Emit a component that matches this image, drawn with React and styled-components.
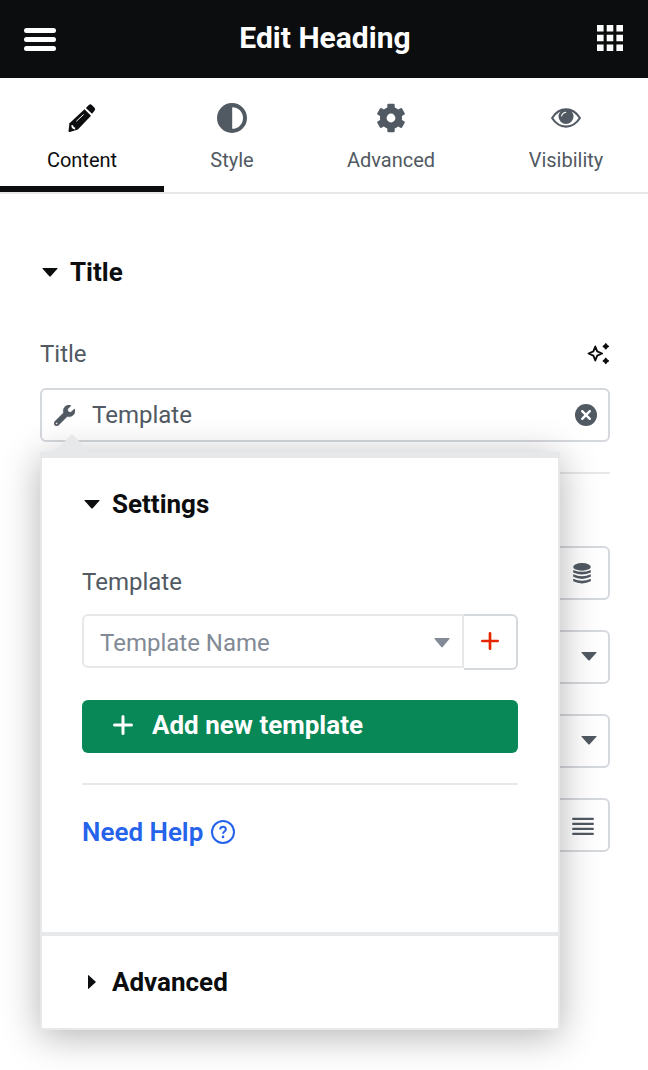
import React, { useState } from "react";
import styled, { createGlobalStyle, css } from "styled-components";

const tabs = [
    { id: "content", label: "Content", Icon: PencilIcon },
    { id: "style", label: "Style", Icon: ContrastIcon },
    { id: "advanced", label: "Advanced", Icon: GearIcon },
    { id: "visibility", label: "Visibility", Icon: EyeIcon },
];

/* icons */
function PencilIcon() {
    return (
        <svg width="28" height="30" viewBox="0 0 28 30" fill="currentColor">
            <path d="M16.500 6.300 23 12.700 9.900 26.400 1.900 29q-1.500.3-1.400-1.200L1.500 20.300Z" />
            <path d="m17.900 4.900 2.900-2.900q1.500-1.400 3 0l2.700 2.700q1.400 1.500 0 3l-2.500 3Z" />
            <path d="M8.300 18.300 15.600 11.500" stroke="#fff" strokeWidth="1" fill="none" />
            <path d="M4.200 22.200Q4.200 25.200 7.200 25.600" stroke="#fff" strokeWidth="1.800" fill="none" />
        </svg>
    );
}

function ContrastIcon() {
    return (
        <svg width="30" height="30" viewBox="0 0 30 30" fill="currentColor">
            <path fillRule="evenodd" d="M15 0a15 15 0 1 0 0 30 15 15 0 0 0 0-30Zm.2 4.200a10.800 10.800 0 0 1 0 21.600Z" />
        </svg>
    );
}

function GearIcon() {
    return (
        <svg width="28" height="30" viewBox="-14 -15 28 30" fill="currentColor">
            <circle r="11" />
            {[0, 60, 120].map((angle) => (
                <rect key={angle} x="-3.700" y="-14.300" width="7.400" height="28.600" rx="1.300" transform={`rotate(${angle})`} />
            ))}
            <circle r="4.400" fill="#fff" />
        </svg>
    );
}

function EyeIcon() {
    return (
        <svg width="30" height="20" viewBox="0 0 30 20" fill="currentColor">
            <path d="M1.100 10Q6.500 1.400 15 1.400T28.900 10Q23.500 18.600 15 18.600T1.100 10Z" fill="none" stroke="currentColor" strokeWidth="2.100" strokeLinejoin="round" />
            <circle cx="15" cy="8.500" r="7.500" />
            <path d="M10.700 8Q11.200 5 14.800 4.300" fill="none" stroke="#fff" strokeWidth="1.100" strokeLinecap="round" />
        </svg>
    );
}

function SparkleIcon() {
    return (
        <svg width="24" height="24" viewBox="0 0 24 24" fill="currentColor">
            <path d="M9.300 4.500 11.200 9.300 16.100 11.500 11.200 13.700 9.300 18.500 7.400 13.700 2.500 11.500 7.400 9.300Z" fill="#fff" stroke="currentColor" strokeWidth="1.900" strokeLinejoin="round" />
            <path d="M19.800 1.700q.8 1.800 2.600 2.600-1.800.8-2.600 2.600-.8-1.800-2.600-2.600 1.800-.8 2.600-2.600ZM19.800 16.300q.8 1.800 2.600 2.600-1.800.8-2.600 2.600-.8-1.800-2.600-2.600 1.800-.8 2.600-2.600Z" stroke="currentColor" strokeWidth="1.300" strokeLinejoin="round" />
        </svg>
    );
}

function WrenchIcon() {
    return (
        <svg width="21" height="21" viewBox="0 0 512 512" fill="currentColor">
            <path d="M507.700 109.100c-2.200-9-13.500-12.100-20.100-5.500l-74.400 74.400-67.900-11.300L334 98.900l74.400-74.400c6.600-6.600 3.400-17.900-5.700-20.200-47.400-11.700-99.600.9-136.600 37.900-39.600 39.600-50.600 97.100-34.100 147.200L18.700 402.800c-25 25-25 65.500 0 90.500s65.500 25 90.500 0l213.200-213.200c50.100 16.700 107.500 5.700 147.400-34.200 37.100-37.100 49.700-89.300 37.900-136.800ZM64 472c-13.300 0-24-10.700-24-24s10.700-24 24-24 24 10.700 24 24-10.700 24-24 24Z" stroke="currentColor" strokeWidth="10" />
        </svg>
    );
}

function ClearIcon() {
    return (
        <svg width="22" height="22" viewBox="0 0 22 22">
            <circle cx="11" cy="11" r="11" fill="currentColor" />
            <path d="m7.200 7.200 7.600 7.600m0-7.600-7.600 7.600" stroke="#fff" strokeWidth="2.400" strokeLinecap="round" />
        </svg>
    );
}

function DatabaseIcon() {
    return (
        <svg width="18" height="21" viewBox="0 0 18 21" fill="currentColor">
            <ellipse cx="9" cy="3.900" rx="8.800" ry="3.800" />
            <path d="M.2 6.900q8.800 3.900 17.600 0v2.500q-8.800 4.200-17.600 0ZM.2 11.300q8.800 3.900 17.600 0v2.500q-8.800 4.200-17.600 0ZM.2 15.800q8.800 3.900 17.600 0v2.500q-8.800 4.200-17.600 0Z" />
        </svg>
    );
}

function JustifyIcon() {
    return (
        <svg width="22" height="22" viewBox="0 0 22 22" fill="none" stroke="currentColor" strokeWidth="2.300" strokeLinecap="round">
            <path d="M1.200 4.900h19.600M1.200 9.900h19.600M1.200 14.900h19.600M1.200 19.900h19.600" />
        </svg>
    );
}

function PlusIcon({ size }) {
    return (
        <svg width={size} height={size} viewBox="0 0 20 20" fill="none" stroke="currentColor" strokeWidth="3" strokeLinecap="round">
            <path d="M10 1.500v17M1.500 10h17" />
        </svg>
    );
}

function HelpIcon() {
    return (
        <svg width="24" height="24" viewBox="0 0 24 24" fill="none" stroke="currentColor">
            <circle cx="12" cy="12" r="11" strokeWidth="2" />
            <path d="M9.200 9.400c0-3.500 5.700-3.400 5.700-.2 0 2.200-2.900 2.300-2.900 4.600" strokeWidth="2" />
            <circle cx="12" cy="16.900" r="1.300" fill="currentColor" stroke="none" />
        </svg>
    );
}

function AppsIcon() {
    return (
        <svg width="26" height="26" viewBox="0 0 26 26" fill="currentColor">
            <path d="M0 0h6.600v6.600H0zM9.700 0h6.600v6.600H9.700zM19.400 0H26v6.600h-6.600zM0 9.700h6.600v6.600H0zM9.700 9.700h6.600v6.600H9.700zM19.400 9.700H26v6.600h-6.600zM0 19.400h6.600V26H0zM9.700 19.400h6.600V26H9.700zM19.400 19.400H26V26h-6.600z" />
        </svg>
    );
}

function CaretIcon({ right, tall }) {
    return right ? (
        <svg width="8" height="14" viewBox="0 0 8 14" fill="currentColor">
            <path d="M0 .4Q0-.3.600.300L7.500 6.400q.6.600 0 1.200L.6 13.700Q0 14.300 0 13.600Z" />
        </svg>
    ) : (
        <svg width="16" height={tall ? 10 : 9} viewBox="0 0 16 9" preserveAspectRatio="none" fill="currentColor">
            <path d="M1 0h14q1.100 0 .4.800L8.700 8.200q-.7.600-1.400 0L.6.800Q-.1 0 1 0Z" />
        </svg>
    );
}

export default function App() {
    const [activeTab, setActiveTab] = useState("content");

    return (
        <Panel>
            <GlobalStyle />
            <Header>
                <MenuButton aria-label="Menu">
                    <i />
                    <i />
                    <i />
                </MenuButton>
                <HeaderTitle>Edit Heading</HeaderTitle>
                <AppsButton aria-label="Widgets">
                    <AppsIcon />
                </AppsButton>
            </Header>

            <Tabs>
                {tabs.map(({ id, label, Icon }) => (
                    <Tab key={id} $active={id === activeTab} onClick={() => setActiveTab(id)}>
                        <TabIcon>
                            <Icon />
                        </TabIcon>
                        {label}
                    </Tab>
                ))}
            </Tabs>

            <Controls>
                <SectionHeading>
                    <CaretBox>
                        <CaretIcon />
                    </CaretBox>
                    Title
                </SectionHeading>

                <LabelRow>
                    <Label>Title</Label>
                    <AiButton aria-label="AI">
                        <SparkleIcon />
                    </AiButton>
                </LabelRow>

                <DynamicField>
                    <WrenchIcon />
                    <span>Template</span>
                    <IconButton aria-label="Remove">
                        <ClearIcon />
                    </IconButton>

                    <Popup>
                        <SettingsSection>
                            <SectionHeading $compact>
                                <CaretBox>
                                    <CaretIcon />
                                </CaretBox>
                                Settings
                            </SectionHeading>
                            <TemplateLabel>Template</TemplateLabel>
                            <SelectRow>
                                <TemplateSelect>
                                    Template Name
                                    <CaretIcon tall />
                                </TemplateSelect>
                                <AddButton aria-label="Add">
                                    <PlusIcon size={18} />
                                </AddButton>
                            </SelectRow>
                            <NewTemplateButton>
                                <PlusIcon size={20} />
                                Add new template
                            </NewTemplateButton>
                            <Divider />
                            <HelpLink href="#">
                                Need Help
                                <HelpIcon />
                            </HelpLink>
                        </SettingsSection>
                        <AdvancedSection>
                            <SectionHeading $compact>
                                <CaretBox>
                                    <CaretIcon right />
                                </CaretBox>
                                Advanced
                            </SectionHeading>
                        </AdvancedSection>
                    </Popup>
                </DynamicField>

                <Divider />

                <FieldList>
                    <Field $end={17}>
                        <DatabaseIcon />
                    </Field>
                    <Field $end={11} $raise>
                        <CaretIcon />
                    </Field>
                    <Field $end={11} $raise>
                        <CaretIcon />
                    </Field>
                    <Field $end={14}>
                        <JustifyIcon />
                    </Field>
                </FieldList>
            </Controls>
        </Panel>
    );
}

/* styles */
const GlobalStyle = createGlobalStyle`
  * {
    box-sizing: border-box;
  }

  body {
    margin: 0;
    background: #fff;
    font-family: Roboto, "Liberation Sans", sans-serif;
  }

  button {
    padding: 0;
    border: 0;
    background: transparent;
    color: inherit;
    font-family: inherit;
  }

  svg {
    display: block;
    flex-shrink: 0;
  }
`;

const Panel = styled.div`
  height: 1070px;
  overflow: hidden;
  background: #fff;
  color: #515962;
`;

const Header = styled.header`
  display: flex;
  align-items: center;
  justify-content: space-between;
  height: 78px;
  padding: 0 25px 0 24px;
  background: #0c0d0e;
  color: #fff;
`;

const IconButton = styled.button`
  display: flex;
`;

const AppsButton = styled(IconButton)`
  margin-bottom: 2px;
`;

const MenuButton = styled.button`
  display: grid;
  gap: 4px;
  width: 32px;
  margin-top: 1px;

  i {
    height: 5px;
    border-radius: 3px;
    background: #fff;
  }
`;

const HeaderTitle = styled.h1`
  margin: 0;
  padding: 0 3px 4px 0;
  font-size: 30px;
  font-weight: 700;
`;

const Tabs = styled.nav`
  display: grid;
  grid-template-columns: 164px 136px 182px 1fr;
  height: 116px;
  border-bottom: 2px solid #e6e8ea;
`;

const Tab = styled.button`
  display: flex;
  flex-direction: column;
  align-items: center;
  gap: 13px;
  padding-top: 22px;
  border-bottom: 6px solid transparent;
  font-size: 20px;
  line-height: 24px;

  &:last-child {
    padding-left: 2px;
  }

  ${({ $active }) =>
      $active &&
      css`
        color: #0c0d0e;
        border-color: #0c0d0e;
      `}
`;

const TabIcon = styled.span`
  display: grid;
  place-items: center;
  height: 35px;
`;

const Controls = styled.main`
  padding: 48px 38px 0 40px;
`;

const SectionHeading = styled.h2`
  display: flex;
  align-items: center;
  height: ${({ $compact }) => ($compact ? "92px" : "60px")};
  margin: 0;
  color: #0c0d0e;
  font-size: 26px;
  font-weight: 700;
`;

const CaretBox = styled.span`
  display: flex;
  justify-content: center;
  width: 20px;
  margin-right: 10px;
`;

const LabelRow = styled.div`
  display: flex;
  align-items: center;
  justify-content: space-between;
  height: 32px;
  margin: 36px 0 18px;
`;

const Label = styled.span`
  font-size: 24px;
`;

const AiButton = styled(IconButton)`
  color: #0c0d0e;
`;

const DynamicField = styled.div`
  position: relative;
  display: flex;
  align-items: center;
  height: 54px;
  margin-bottom: 30px;
  padding: 0 11px 0 12px;
  border: 2px solid #d5d8dc;
  border-radius: 6px;
  font-size: 24px;

  > span {
    flex: 1;
    margin-left: 17px;
  }
`;

const Popup = styled.div`
  position: absolute;
  top: 62px;
  left: -2px;
  z-index: 2;
  width: 520px;
  border: 2px solid #e6e8ea;
  border-top-width: 6px;
  background: #fff;
  box-shadow: 0 6px 36px rgba(0, 0, 0, 0.3);

  &::before {
    content: "";
    position: absolute;
    top: -24px;
    left: 12px;
    border: 18px solid transparent;
    border-top: 0;
    border-bottom-color: #e6e8ea;
  }
`;

const SettingsSection = styled.section`
  height: 478px;
  padding: 0 40px;
  border-bottom: 4px solid #e6e8ea;
`;

const AdvancedSection = styled.section`
  padding: 0 40px;
`;

const TemplateLabel = styled.div`
  height: 64px;
  padding-top: 18px;
  font-size: 24px;
  line-height: 28px;
`;

const SelectRow = styled.div`
  display: flex;
  align-items: flex-start;
  margin-bottom: 30px;
`;

const TemplateSelect = styled.div`
  display: flex;
  flex: 1;
  align-items: center;
  justify-content: space-between;
  height: 54px;
  padding: 3px 12px 0 16px;
  border: 2px solid #e6e8ea;
  border-radius: 6px 0 0 6px;
  color: #818a96;
  font-size: 24px;
`;

const AddButton = styled.button`
  display: grid;
  place-items: center;
  width: 54px;
  height: 56px;
  padding: 0 1px 2px 0;
  border: 2px solid #d5d8dc;
  border-left: 0;
  border-radius: 0 6px 6px 0;
  color: #e62600;
`;

const NewTemplateButton = styled.button`
  display: flex;
  align-items: center;
  gap: 19px;
  width: 100%;
  height: 53px;
  margin-bottom: 30px;
  padding: 0 31px 4px;
  border-radius: 6px;
  background: #088757;
  color: #fff;
  font-size: 26px;
  font-weight: 700;
`;

const Divider = styled.hr`
  height: 2px;
  margin: 0;
  border: 0;
  background: #e6e8ea;
`;

const HelpLink = styled.a`
  display: inline-flex;
  align-items: center;
  gap: 8px;
  margin-top: 32px;
  color: #2563eb;
  font-size: 26px;
  font-weight: 600;
  text-decoration: none;
`;

const FieldList = styled.div`
  display: grid;
  gap: 30px;
  margin-top: 72px;
`;

const Field = styled.div`
  display: flex;
  align-items: center;
  justify-content: flex-end;
  height: 54px;
  padding-right: ${({ $end }) => $end}px;
  padding-bottom: ${({ $raise }) => ($raise ? "2px" : 0)};
  border: 2px solid #d5d8dc;
  border-radius: 6px;
`;
